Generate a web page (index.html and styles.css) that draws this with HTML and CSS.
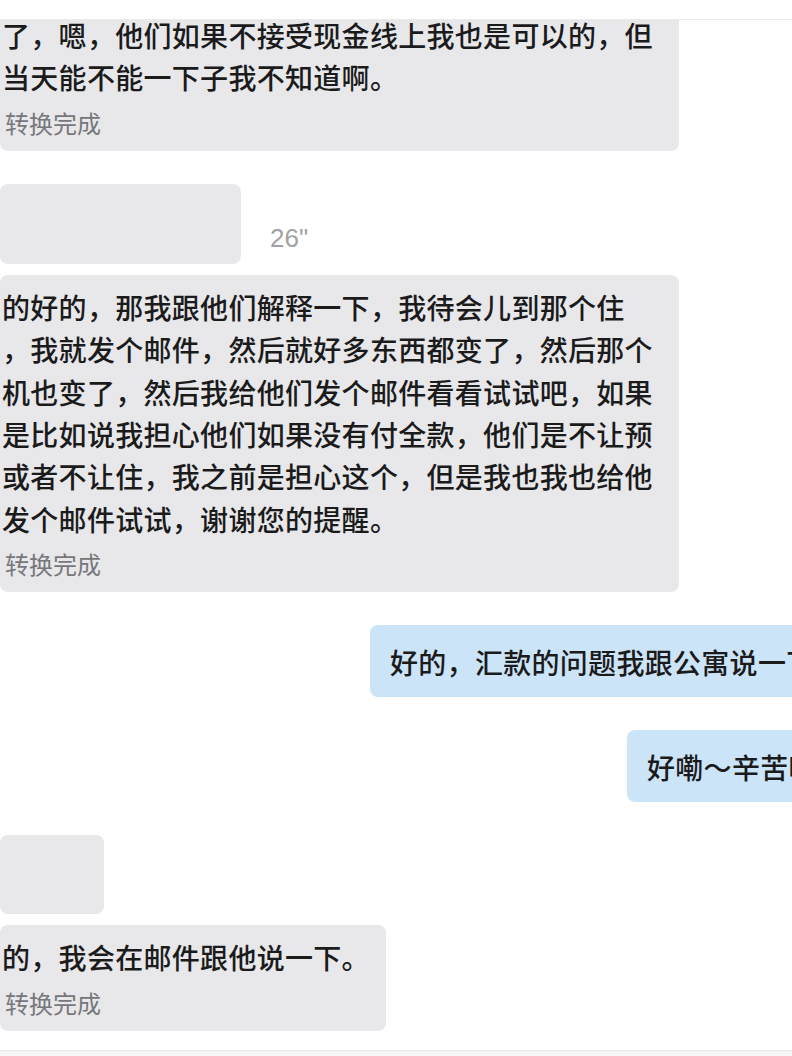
FILE: index.html
```html
<!DOCTYPE html>
<html lang="zh-CN">
<head>
<meta charset="utf-8">
<title>聊天记录</title>
<link rel="stylesheet" href="styles.css">
</head>
<body>
<div class="page">
  <div class="topbar"></div>
  <div class="chat">
    <div class="group first">
      <div class="bubble in full">
        <div class="text">了，嗯，他们如果不接受现金线上我也是可以的，但<br>当天能不能一下子我不知道啊。</div>
        <div class="label">转换完成</div>
      </div>
    </div>

    <div class="group">
      <div class="voice-row">
        <div class="voice wide"></div>
        <span class="duration">26"</span>
      </div>
      <div class="bubble in full">
        <div class="text">的好的，那我跟他们解释一下，我待会儿到那个住<br>，我就发个邮件，然后就好多东西都变了，然后那个<br>机也变了，然后我给他们发个邮件看看试试吧，如果<br>是比如说我担心他们如果没有付全款，他们是不让预<br>或者不让住，我之前是担心这个，但是我也我也给他<br>发个邮件试试，谢谢您的提醒。</div>
        <div class="label">转换完成</div>
      </div>
    </div>

    <div class="group out-group">
      <div class="bubble out first-out">好的，汇款的问题我跟公寓说一下。</div>
    </div>

    <div class="group out-group">
      <div class="bubble out second-out">好嘞～辛苦啦</div>
    </div>

    <div class="group">
      <div class="voice-row">
        <div class="voice narrow"></div>
      </div>
      <div class="bubble in">
        <div class="text">的，我会在邮件跟他说一下。</div>
        <div class="label">转换完成</div>
      </div>
    </div>
  </div>
  <div class="bottombar"></div>
</div>
</body>
</html>
```

FILE: styles.css
```css
* {
  box-sizing: border-box;
}

html, body {
  margin: 0;
  padding: 0;
  background: #ffffff;
}

body {
  width: 792px;
  height: 1056px;
  overflow: hidden;
  font-family: "Noto Sans CJK SC", "Noto Sans", sans-serif;
  color: #1b1b1b;
}

.page {
  display: flex;
  flex-direction: column;
  width: 792px;
  height: 1056px;
}

.topbar {
  flex: 0 0 20px;
  border-bottom: 1px solid #ebebeb;
  background: #ffffff;
}

.chat {
  flex: 1 1 auto;
  overflow: hidden;
  display: flex;
  flex-direction: column;
  gap: 33px;
}

.group {
  display: flex;
  flex-direction: column;
  align-items: flex-start;
  gap: 11px;
}

.group.first {
  margin-top: -17px;
}

.out-group {
  align-items: flex-end;
}

.bubble {
  border-radius: 8px;
}

.bubble.in {
  background: #e8e8eb;
  padding: 11px 16px 11px 2px;
  white-space: nowrap;
}

.bubble.in.full {
  width: 679px;
}

.text {
  font-size: 28px;
  font-weight: 500;
  line-height: 42.4px;
  letter-spacing: 0.3px;
}

.label {
  margin-top: 7px;
  padding-left: 3px;
  font-size: 24px;
  line-height: 34px;
  color: #77777a;
}

.voice-row {
  display: flex;
  align-items: flex-end;
  gap: 29px;
}

.voice {
  background: #e8e8eb;
  border-radius: 8px;
  height: 80px;
}

.voice.wide {
  width: 241px;
}

.voice.narrow {
  width: 104px;
  height: 79px;
}

.duration {
  font-family: "Liberation Sans", Arial, sans-serif;
  font-size: 26px;
  line-height: 30px;
  color: #a2a2a2;
  margin-bottom: 11px;
}

.bubble.out {
  background: #cce4f8;
  font-size: 28px;
  font-weight: 500;
  line-height: 42px;
  letter-spacing: 0.3px;
  padding: 16px 0 14px 20px;
  white-space: nowrap;
  overflow: hidden;
  border-radius: 8px 0 0 8px;
}

.bubble.first-out {
  width: 422px;
}

.bubble.second-out {
  width: 165px;
}

.bottombar {
  flex: 0 0 6px;
  border-top: 1px solid #e6e6e6;
  background: #f6f6f6;
}
```
